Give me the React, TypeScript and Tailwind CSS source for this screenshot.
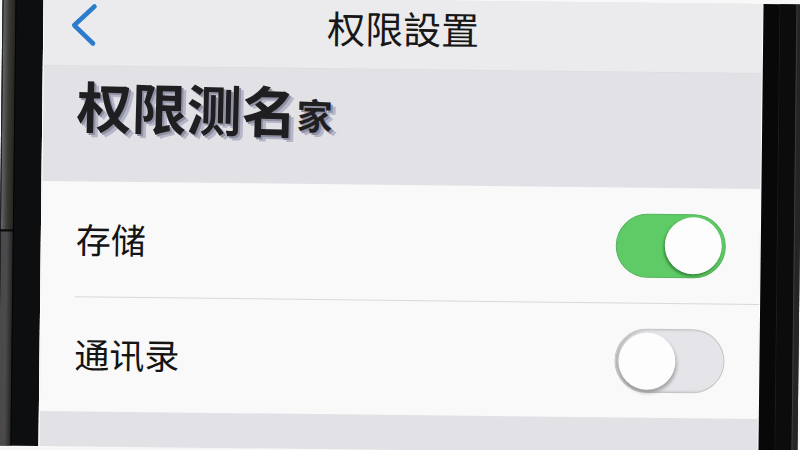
import React from "react";

type Permission = { id: string; label: string; enabled: boolean };

const permissions: Permission[] = [
  { id: "storage", label: "存储", enabled: true },
  { id: "contacts", label: "通讯录", enabled: false },
];

function Switch({ id, enabled }: { id: string; enabled: boolean }) {
  return (
    <input
      id={id}
      type="checkbox"
      role="switch"
      defaultChecked={enabled}
      className="flex h-16 w-[110px] shrink-0 cursor-pointer appearance-none items-center rounded-full border border-[#c4c4c6] bg-[#e5e4e8] px-[3px] shadow-[inset_3px_0_3px_#b9b9bb] before:size-[57px] before:rounded-full before:bg-[#fdfdfd] before:shadow-[1px_3px_4px_rgba(0,0,0,0.3)] before:content-[''] checked:justify-end checked:border-[#55b35b] checked:bg-[#5fcb66] checked:shadow-none checked:before:shadow-[-1px_2px_3px_rgba(0,60,0,0.5)]"
    />
  );
}

function PermissionRow({ item, last }: { item: Permission; last: boolean }) {
  return (
    <li className="pl-[34px]">
      <div
        className={`flex items-center justify-between pr-[34px] ${
          last ? "h-[114px]" : "h-[116px] border-b border-[#d8d8da]"
        }`}
      >
        <label htmlFor={item.id} className="pb-[2px] text-[35px] leading-[48px] text-[#141414]">
          {item.label}
        </label>
        <Switch id={item.id} enabled={item.enabled} />
      </div>
    </li>
  );
}

function LeftBezel() {
  return (
    <div className="flex w-[41px] shrink-0 bg-[#0d0e0f]">
      <div className="flex w-[13px] flex-col">
        <div className="h-[234px] border-l border-[#22242a] bg-linear-to-r from-[#66676a] via-[#3a3934] to-[#262521]" />
        <div className="h-[2px] bg-[#0a0a0a]" />
        <div className="flex-1 border-l border-[#22242a] bg-linear-to-r from-[#4a494b] via-[#4c4a4b] to-[#262526]" />
      </div>
      <div className="w-px bg-[#050505]" />
    </div>
  );
}

function RightBezel() {
  return (
    <div className="flex w-[39px] shrink-0 bg-[#080808]">
      <div className="w-4" />
      <div className="w-px bg-[#1d1d1d]" />
      <div className="flex-1 bg-[#0c0c0c]" />
      <div className="w-[6px] border-l border-[#3c3c3c] bg-[#252525]" />
    </div>
  );
}

export default function App() {
  return (
    <div className="h-screen overflow-hidden bg-[#f8f8f8] font-['Noto_Sans_CJK_SC','Noto_Sans_CJK_TC',sans-serif]">
      <div className="flex h-full rotate-[0.65deg]">
        <LeftBezel />
        <main className="flex min-w-0 flex-1 flex-col border-x border-white bg-[#e2e1e6]">
          <header className="grid h-[70px] shrink-0 grid-cols-[1fr_auto_1fr] items-start border-b border-[#dddce0] bg-[#ebebed]">
            <button type="button" aria-label="返回" className="ml-[26px] mt-1 w-8 cursor-pointer">
              <svg viewBox="0 0 32 48" className="h-12 w-8" fill="none">
                <path
                  d="M24 6 L4 25 L23 43"
                  stroke="#2b7dcc"
                  strokeWidth="4.6"
                  strokeLinecap="round"
                  strokeLinejoin="round"
                />
              </svg>
            </button>
            <h1 className="pt-[6px] text-[38px] leading-[44px] text-[#171717]">权限設置</h1>
          </header>
          <h2 className="flex h-[115px] shrink-0 origin-top-left rotate-[0.8deg] items-start pl-[34px] pt-[5px] font-bold text-[#1f1f21] [text-shadow:2px_2px_0_#8f90a2,5px_4px_0_#b4b5c6]">
            <span className="text-[55px] leading-[64px]">权限测名</span>
            <span className="pt-2 text-[36px] leading-[56px]">家</span>
          </h2>
          <ul className="shrink-0 bg-[#f9f9f9]">
            {permissions.map((item, i) => (
              <PermissionRow key={item.id} item={item} last={i === permissions.length - 1} />
            ))}
          </ul>
        </main>
        <RightBezel />
      </div>
    </div>
  );
}
